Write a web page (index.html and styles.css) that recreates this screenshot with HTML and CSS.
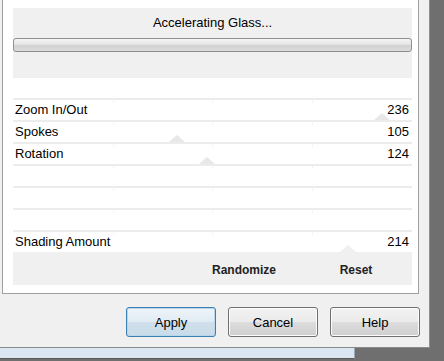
FILE: index.html
```html
<!DOCTYPE html>
<html lang="en">
<head>
    <meta charset="UTF-8">
    <title>Accelerating Glass</title>
    <link rel="stylesheet" href="styles.css">
</head>
<body>
    <div class="dialog">
        <div class="panel">
            <div class="content">
                <div class="header">
                    <div class="title">Accelerating Glass...</div>
                    <div class="progress"></div>
                </div>
                <div class="sliders">
                    <div class="row"><span>Zoom In/Out</span><span>236</span><i class="thumb" style="left: 92.55%"></i></div>
                    <div class="row"><span>Spokes</span><span>105</span><i class="thumb" style="left: 41.18%"></i></div>
                    <div class="row"><span>Rotation</span><span>124</span><i class="thumb" style="left: 48.63%"></i></div>
                    <div class="row"></div>
                    <div class="row"></div>
                    <div class="row"></div>
                    <div class="row"><span>Shading Amount</span><span>214</span><i class="thumb last" style="left: 83.92%"></i></div>
                </div>
                <div class="footer">
                    <span class="action">Randomize</span>
                    <span class="action">Reset</span>
                </div>
            </div>
        </div>
        <div class="buttons">
            <button class="btn default">Apply</button>
            <button class="btn">Cancel</button>
            <button class="btn">Help</button>
        </div>
    </div>
    <div class="taskbar"></div>
</body>
</html>
```

FILE: styles.css
```css
body {
    margin: 0;
    padding: 0;
    background-color: #6f6f6f;
    font-family: "Liberation Sans", Arial, sans-serif;
    font-size: 13px;
    color: #000;
    height: 361px;
    overflow: hidden;
}
.dialog {
    width: 430px;
    height: 348px;
    box-sizing: border-box;
    background-color: #f0f0f0;
    border-right: 1px solid #8f8f8f;
    border-bottom: 1px solid #8a8a8a;
}
.panel {
    margin-left: 2px;
    width: 417px;
    height: 294px;
    box-sizing: border-box;
    background-color: #fff;
    border-left: 1px solid #a0a0a0;
    border-right: 1px solid #a0a0a0;
    border-bottom: 1px solid #a0a0a0;
}
.content {
    padding: 8px 6px 0 10px;
}
.header {
    height: 70px;
    background-color: #f0f0f0;
}
.title {
    height: 30px;
    line-height: 29px;
    text-align: center;
}
.progress {
    height: 14px;
    box-sizing: border-box;
    border: 1px solid #8e8f8f;
    border-radius: 3px;
    background: linear-gradient(#f4f4f4, #e6e6e6 45%, #d2d2d2 55%, #dcdcdc);
}
.sliders {
    margin-top: 20px;
}
.row {
    position: relative;
    height: 22px;
    box-sizing: border-box;
    border-top: 2px solid #ececec;
    display: flex;
    justify-content: space-between;
    align-items: center;
    padding: 0 3px 1px 2px;
    background-image: linear-gradient(#f3f3f3, #f3f3f3), linear-gradient(#f3f3f3, #f3f3f3), linear-gradient(#f3f3f3, #f3f3f3);
    background-size: 1px 3px;
    background-repeat: no-repeat;
    background-position: 25% 0, 50% 0, 75% 0;
}
.row span {
    position: relative;
    z-index: 1;
}
.thumb {
    position: absolute;
    bottom: 0;
    width: 0;
    height: 0;
    border-left: 8px solid transparent;
    border-right: 8px solid transparent;
    border-bottom: 7px solid #e8e8e8;
    transform: translateX(-50%);
}
.thumb.last {
    border-bottom-color: #f0f0f0;
}
.footer {
    height: 33px;
    background-color: #f0f0f0;
    display: flex;
    justify-content: flex-end;
}
.action {
    width: 112px;
    padding-top: 2px;
    line-height: 33px;
    text-align: center;
    font-weight: bold;
    font-size: 12px;
    color: #222;
}
.buttons {
    display: flex;
    justify-content: flex-end;
    gap: 12px;
    padding: 13px 9px 0 0;
}
.btn {
    width: 90px;
    height: 30px;
    box-sizing: border-box;
    font-family: "Liberation Sans", Arial, sans-serif;
    font-size: 13px;
    color: #000;
    border: 1px solid #707070;
    border-radius: 3px;
    background: linear-gradient(#f2f2f2, #ebebeb 50%, #dddddd 50%, #cfcfcf);
    box-shadow: inset 0 0 0 1px #fcfcfc;
    padding: 0;
}
.btn.default {
    border-color: #3c7fb1;
    background: linear-gradient(#eef4f9, #e1ebf3 50%, #d0e0ec 50%, #c9dbe8);
    box-shadow: inset 0 0 0 1px #b8d6ea;
}
.taskbar {
    width: 355px;
    height: 11px;
    box-sizing: border-box;
    background-color: #dbe6f3;
    border-right: 1px solid #9aa8b8;
    border-bottom: 1px solid #5a5a5a;
}
```
